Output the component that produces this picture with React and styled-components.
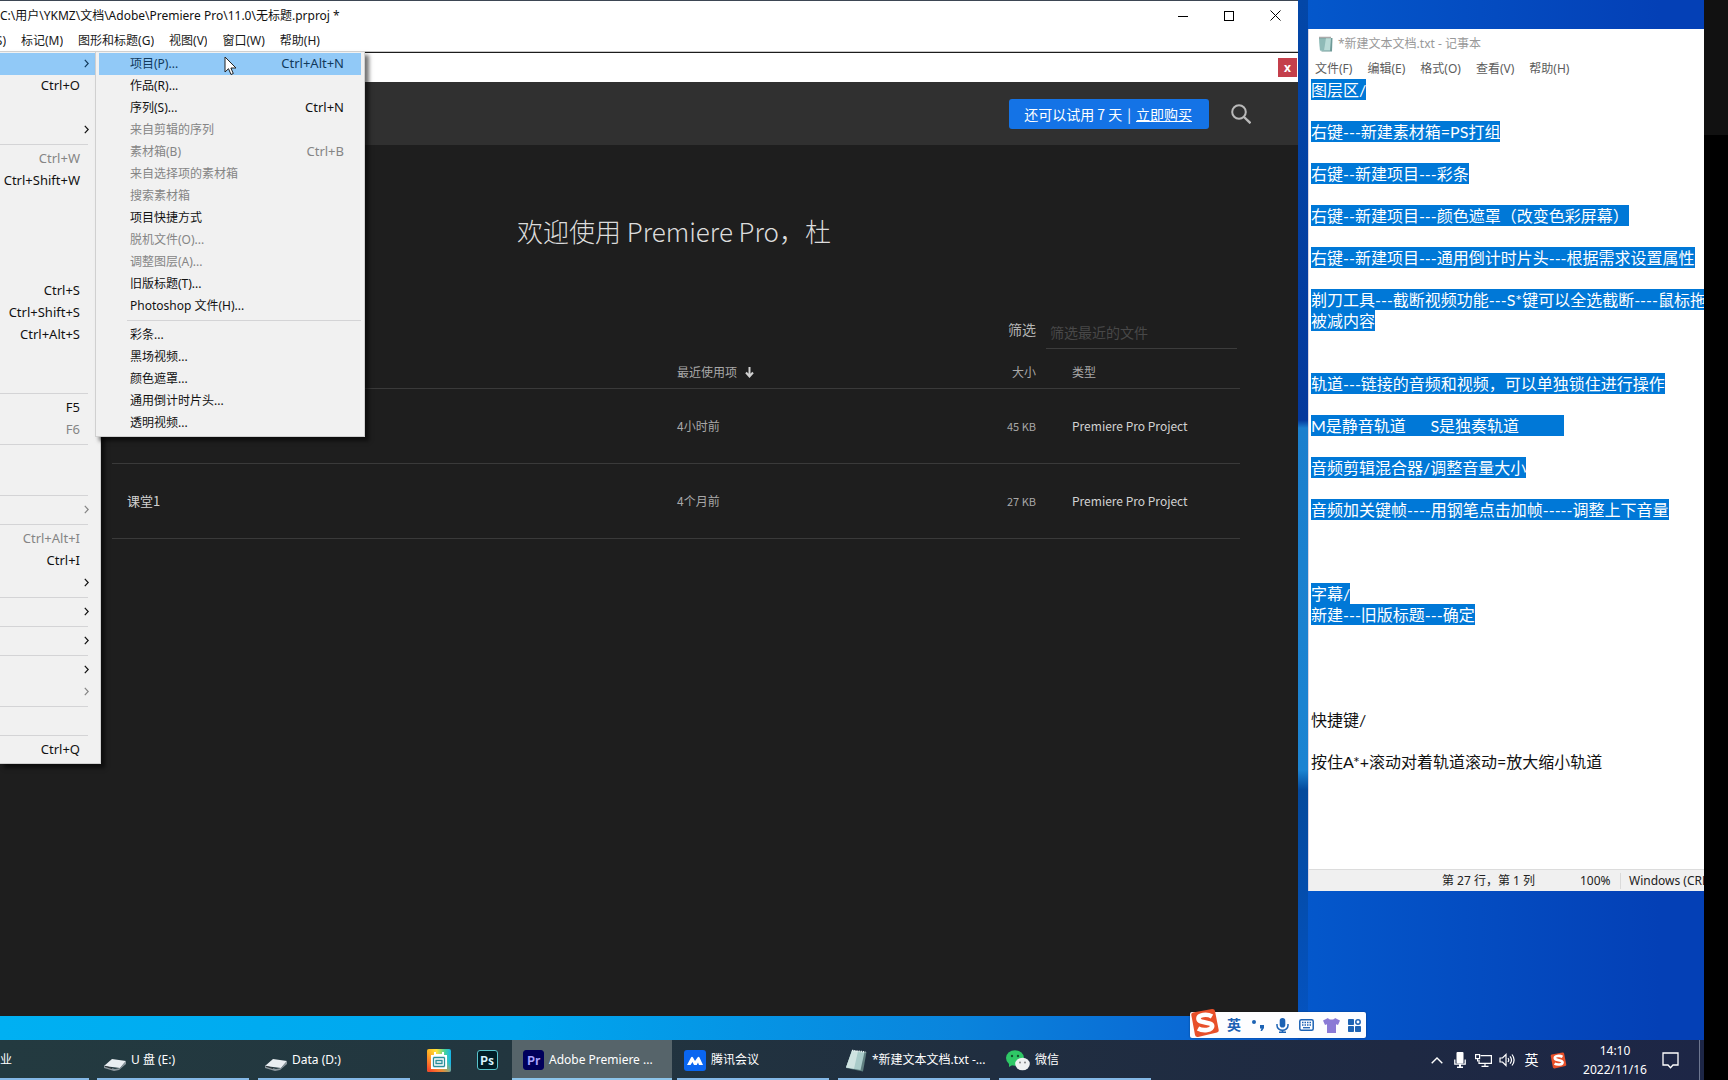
import React from "react";
import styled, { createGlobalStyle, css } from "styled-components";

const ui = `"Noto Sans", "Noto Sans CJK SC", sans-serif`;
const cjk = `"Noto Sans CJK SC", "Noto Sans", sans-serif`;
const note = `Lato, "Noto Sans CJK SC", sans-serif`;

const Global = createGlobalStyle`
  * { box-sizing: border-box; }
  html, body { margin: 0; background: #000; }
  body { font: 12px/16px ${ui}; overflow: hidden; }
  button { margin: 0; padding: 0; border: 0; background: none; font: inherit; color: inherit; cursor: default; white-space: nowrap; }
  a { color: inherit; }
  svg { display: block; flex: none; }
`;

/* ---------- screen ---------- */
const Screen = styled.div`
  display: grid;
  grid-template-columns: minmax(0, 1fr) 24px;
  height: 100vh;
`;
const Bezel = styled.div`
  background: linear-gradient(#111 135px, #000 135px);
`;
const Desktop = styled.div`
  display: flex;
  flex-direction: column;
  min-width: 0;
  background:
    linear-gradient(90deg, #00b0f2 0, #00a6ee 520px, #0a84dc 960px, #0a5cd0 1290px, transparent 1300px) bottom 40px left / 100% 26px no-repeat,
    linear-gradient(#0347a8 0, #04389c 420px, #1c7fcd 428px, #1c84d2 770px, #04499c 790px, #0450b8 960px, #0556c6 100%) 1298px 0 / 10px 100% no-repeat,
    linear-gradient(90deg, #0458cc 1300px, #0440b6 1660px);
`;
const Workspace = styled.div`
  position: relative;
  flex: 1;
  display: flex;
  align-items: stretch;
  gap: 10px;
  min-height: 0;
`;

/* ---------- Premiere window ---------- */
const AppWindow = styled.section`
  position: relative;
  flex: 1;
  min-width: 0;
  margin-bottom: 24px;
  display: flex;
  flex-direction: column;
  background: #1e1e1e;
  border-top: 1px solid #3d4654;
  overflow: hidden;
`;
const TitleBar = styled.header`
  display: flex;
  align-items: center;
  justify-content: space-between;
  height: 29px;
  background: #fff;
  color: #111;
`;
const TitleText = styled.div`
  white-space: pre;
`;
const WindowButtons = styled.div`
  display: flex;
`;
const WindowButton = styled.button`
  display: grid;
  place-items: center;
  width: 46px;
  height: 29px;
`;
const MenuBar = styled.nav`
  display: flex;
  align-items: center;
  gap: 15px;
  height: 22px;
  background: #fff;
  border-bottom: 1px solid #c8c8c8;
  color: #1a1a1a;
`;
const MenuBarItem = styled.button`
  display: flex;
  justify-content: flex-end;
  width: ${(p) => (p.$clipped ? "6px" : "auto")};
  overflow: hidden;
`;
const PanelStrip = styled.div`
  display: flex;
  align-items: center;
  justify-content: flex-end;
  height: 30px;
  padding-right: 1px;
  background: #fff;
  border-top: 1px solid #1c1c1c;
`;
const RedClose = styled.button`
  width: 19px;
  height: 19px;
  background: #c43f4b;
  color: #fff;
  font-weight: 700;
  line-height: 16px;
`;
const HomeHeader = styled.div`
  display: flex;
  align-items: center;
  justify-content: flex-end;
  gap: 22px;
  height: 63px;
  padding-right: 47px;
  background: #303030;
`;
const Trial = styled.div`
  display: flex;
  align-items: center;
  gap: 5px;
  height: 30px;
  padding: 0 17px 0 15px;
  border-radius: 3px;
  background: #1473e6;
  color: #fff;
  font: 14px/20px ${cjk};
  white-space: nowrap;
`;
const Home = styled.main`
  flex: 1;
  display: flex;
  flex-direction: column;
  padding: 64px 58px 0 112px;
  color: #c4c4c4;
  font: 12px/16px ${cjk};
`;
const Welcome = styled.h1`
  margin: 0 0 62px;
  padding-right: 4px;
  font: 300 26px/44px ${cjk};
  color: #dcdcdc;
  text-align: center;
  white-space: pre;
`;
const Filter = styled.label`
  display: flex;
  align-items: flex-start;
  justify-content: flex-end;
  gap: 10px;
  padding-right: 3px;
  font-size: 14px;
  line-height: 28px;
  color: #b4b4b4;
`;
const FilterInput = styled.input`
  width: 191px;
  height: 34px;
  padding: 0 4px;
  border: 0;
  border-bottom: 1px solid #3c3c3c;
  background: none;
  font: 14px/20px ${cjk};
  color: #ccc;
  &::placeholder { color: #484848; opacity: 1; }
`;
const Recent = styled.table`
  width: 100%;
  border-collapse: collapse;
  table-layout: fixed;
  th, td { padding: 0; text-align: left; border-bottom: 1px solid #3a3a3a; font-weight: 400; }
  th { height: 39px; padding-top: 8px; color: #a8a8a8; }
  td { height: 75px; }
  th:first-child, td:first-child { padding-left: 15px; font-size: 13px; color: #d2d2d2; }
  th:nth-child(3), td:nth-child(3) { text-align: right; }
  th:last-child, td:last-child { padding-left: 36px; }
  td:nth-child(2), td:nth-child(3) { color: #a8a8a8; }
  td:nth-child(3) { font-size: 11px; }
  td:last-child { color: #d2d2d2; }
`;
const Col = styled.col`
  width: ${(p) => p.$w};
`;
const SortHead = styled.span`
  display: flex;
  align-items: center;
  gap: 8px;
`;

/* ---------- drop-down menus ---------- */
const Menu = styled.div`
  position: absolute;
  top: 50px;
  left: ${(p) => p.$left};
  width: ${(p) => p.$width};
  padding: 1px ${(p) => (p.$sub ? "3px 2px" : "0 2px 0")};
  background: #f1f1f1;
  border: 1px solid #d0d0d0;
  border-left-width: ${(p) => (p.$sub ? "1px" : "0")};
  box-shadow: 4px 4px 4px rgba(0, 0, 0, 0.55);
  color: #111;
`;
const MenuRow = styled.button`
  display: flex;
  align-items: center;
  width: 100%;
  height: 22px;
  padding-left: ${(p) => (p.$sub ? "31px" : "0")};
  padding-right: ${(p) => (p.$sub ? "17px" : "11px")};
  color: ${(p) => (p.$off ? "#858585" : "#111")};
  ${(p) => p.$on && css`background: #91c9f7; color: #123a5c;`}
`;
const RowKeys = styled.span`
  flex: 1;
  padding-bottom: 2px;
  text-align: right;
  font-size: 13px;
`;
const ArrowSlot = styled.span`
  display: grid;
  place-items: center end;
  width: 9px;
  padding-bottom: 2px;
`;
const Separator = styled.div`
  height: 7px;
  padding-top: 3px;
  margin: 0 ${(p) => (p.$sub ? "0 0 28px" : "12px 0 0")};
  &::after { content: ""; display: block; height: 1px; background: #d4d4d6; }
`;
const Cursor = styled.svg`
  position: absolute;
  left: 224px;
  top: 55px;
`;

/* ---------- notepad ---------- */
const Notepad = styled.section`
  flex: 0 0 396px;
  min-width: 0;
  margin: 29px 0 149px;
  display: flex;
  flex-direction: column;
  background: #fff;
  border-left: 1px solid #d9d3e2;
  overflow: hidden;
`;
const NoteTitle = styled.header`
  display: flex;
  align-items: center;
  gap: 5px;
  height: 30px;
  padding-left: 9px;
  color: #999;
  white-space: nowrap;
`;
const NoteMenu = styled.nav`
  display: flex;
  align-items: center;
  gap: 15px;
  height: 20px;
  padding-left: 6px;
  color: #5c5c5c;
`;
const NoteText = styled.div`
  flex: 1;
  min-height: 0;
  padding-left: 2px;
  overflow: hidden;
  outline: none;
  font: 16px/21px ${note};
  color: #111;
  white-space: pre;
`;
const NoteLine = styled.div`
  height: 21px;
`;
const Selected = styled.mark`
  display: inline-block;
  height: 21px;
  background: #0078d7;
  color: #fff;
`;
const NoteStatus = styled.footer`
  display: flex;
  align-items: center;
  justify-content: flex-end;
  height: 22px;
  background: #f0f0f0;
  border-top: 1px solid #dcdcdc;
  color: #222;
  white-space: pre;
`;
const StatusCell = styled.span`
  width: ${(p) => p.$w};
  padding-left: 8px;
  border-left: ${(p) => (p.$line ? "1px solid #dadada" : "0")};
  overflow: hidden;
`;

/* ---------- input method bar ---------- */
const ImeBar = styled.div`
  position: absolute;
  left: 1190px;
  bottom: 2px;
  display: flex;
  align-items: center;
  gap: 10px;
  height: 26px;
  padding-right: 5px;
  border-radius: 2px;
  background: #fdfdff;
  box-shadow: 0 0 2px rgba(0, 0, 0, 0.4);
`;
const ImeLogo = styled.span`
  width: 27px;
  height: 32px;
  margin-top: -3px;
`;
const ImeKey = styled.button`
  display: grid;
  place-items: center;
  width: 14px;
  color: #1c62b4;
  font-weight: 700;
  font-size: 14px;
`;

/* ---------- taskbar ---------- */
const Taskbar = styled.footer`
  flex: none;
  display: flex;
  align-items: stretch;
  justify-content: space-between;
  height: 40px;
  background: linear-gradient(90deg, #233a40 0, #22363f 500px, #202e40 1000px, #1e2943 1400px, #1d2646 100%);
  color: #fff;
`;
const Tasks = styled.div`
  display: flex;
  gap: 1px;
`;
const Task = styled.button`
  display: flex;
  align-items: center;
  gap: 5px;
  width: ${(p) => p.$w || "160px"};
  padding: 0 0 0 ${(p) => (p.$flush ? "0" : "11px")};
  ${(p) => p.$open && css`
    background: linear-gradient(#84b8e6, #84b8e6) bottom left ${p.$flush ? "0" : "4px"} / calc(100% - ${p.$flush ? "3px" : "8px"}) 2px no-repeat;
  `}
  ${(p) => p.$active && css`
    background: linear-gradient(#8cc4ea, #8cc4ea) bottom / 100% 2px no-repeat, #56646a;
  `}
  ${(p) => p.$icon && css`justify-content: center; padding-left: 0;`}
`;
const Tray = styled.div`
  display: flex;
  align-items: center;
  gap: 8px;
`;
const TrayButton = styled.button`
  display: grid;
  place-items: center;
  width: ${(p) => p.$w || "15px"};
  height: 40px;
  font-size: 14px;
`;
const Clock = styled.time`
  width: 78px;
  text-align: center;
  font-size: 12px;
  line-height: 19px;
`;
const PeekEdge = styled.div`
  align-self: stretch;
  width: 5px;
  margin-left: 12px;
  border-left: 1px solid #6d7690;
`;

/* ---------- drawings ---------- */
const Chevron = () => (
  <svg width="5" height="9" viewBox="0 0 5 9" fill="none" stroke="currentColor" strokeWidth="1.2"><path d="M.8 .8 4.200 4.500.8 8.200" /></svg>
);
const SearchIcon = () => (
  <svg width="20" height="20" viewBox="0 0 20 20" fill="none" stroke="#b9b9b9" strokeWidth="2"><circle cx="8" cy="8" r="6.8" /><path d="m13 13 6.5 6.3" strokeWidth="2.4" /></svg>
);
const SortArrow = () => (
  <svg width="9" height="11" viewBox="0 0 9 11" fill="none" stroke="#d0d0d0" strokeWidth="2"><path d="M4.500 0v9M1 5.500l3.500 4 3.500-4" /></svg>
);
const NoteIcon = ({ size = 15 }) => (
  <svg width={size} height={size + 1} viewBox="0 0 15 16">
    <path d="M2.500 2h12l-.5 13.500H3.500z" fill="#6f9a98" />
    <path d="M1 2h12l-1 12.500H2z" fill="#b9dad6" />
    <path d="M1 2h7l-2 12.500H2z" fill="#8fbab7" />
    <path d="M1.500 1.500h12" stroke="#555" strokeWidth="1.600" strokeDasharray="1 1" />
  </svg>
);
const TaskNoteIcon = () => (
  <svg width="22" height="23" viewBox="0 0 22 23">
    <path d="M7 1.500 21.500 3 18 22.500 1 19z" fill="#5f7f80" />
    <path d="M7 1.500 19.500 3 15.500 21 1 18.500z" fill="#a9cbc9" />
    <path d="M7 1.500l6 .8L9 19.800 1 18.500z" fill="#cfe3e1" />
    <path d="M7 1.500 20.500 3" stroke="#e9f2f2" strokeWidth="1.600" strokeDasharray="1.200 1" />
  </svg>
);
const DriveIcon = () => (
  <svg width="22" height="21" viewBox="0 -8 22 21">
    <path d="M0 8 8 1l14 2-6 7z" fill="#e9eef2" />
    <path d="M0 8l11 3 5-1 6-7v3l-7 6-5 1L0 10z" fill="#8b979e" />
    <path d="M1 8.300l7 2.200" stroke="#2c3338" strokeWidth="1.200" />
  </svg>
);
const SogouMark = ({ size }) => (
  <svg width={size} height={size} viewBox="0 0 30 30">
    <path d="M3 4.500Q1 5 1.300 7L5 27q.5 2.300 3 2l19-4.500q2-.5 1.700-2.500L25 3q-.4-2.300-3-2z" fill="#e8502a" />
    <path d="M22 8.500C17 5.500 8 6.500 8.500 11c.4 4.500 13.500 2.500 13.700 7 .1 4.500-9.200 5.300-14.200 2.500" fill="none" stroke="#fff" strokeWidth="4.600" />
  </svg>
);
const MicIcon = ({ color = "currentColor", s = 15 }) => (
  <svg width={s} height={s} viewBox="0 0 15 15" fill={color}><rect x="4.700" y="0" width="5.600" height="9.500" rx="2.800" /><path d="M2 6v1.500a5.500 4.700 0 0 0 11 0V6" fill="none" stroke={color} strokeWidth="1.500" /><path d="M6.700 12h1.600v1.500H11V15H4v-1.500h2.700z" /></svg>
);
const TrayMicIcon = () => (
  <svg width="12" height="16" viewBox="0 0 12 16" fill="#fff"><rect x="2.500" width="7" height="11.500" rx="1" /><path d="M.8 7.500v4.700h10.400V7.500" fill="none" stroke="#fff" strokeWidth="1.300" /><path d="M5 12h2v2.500h2V16H3v-1.500h2z" /></svg>
);
const KeyboardIcon = () => (
  <svg width="15" height="12" viewBox="0 0 15 12" fill="none" stroke="#1c62b4"><rect x=".8" y=".8" width="13.400" height="10.400" rx="1.500" strokeWidth="1.500" /><path d="M3 3.500h9M3 6h9" strokeWidth="1.500" strokeDasharray="1.500 1" /><path d="M4 8.700h7" strokeWidth="1.300" /></svg>
);
const ShirtIcon = () => (
  <svg width="17" height="15" viewBox="0 0 17 15"><path d="M5 0c1 2 6 2 7 0l5 2.500-2 4.500-2-.8V15H4V6.200L2 7 0 2.500z" fill="#8b7ad6" /></svg>
);
const GridIcon = () => (
  <svg width="13" height="13" viewBox="0 0 13 13" fill="#1c62b4"><rect width="6" height="6" rx=".8" /><rect y="7" width="6" height="6" rx=".8" /><rect x="7" y="7" width="6" height="6" rx=".8" /><circle cx="10" cy="3" r="2.200" fill="none" stroke="#1c62b4" strokeWidth="1.500" /></svg>
);
const PunctIcon = () => (
  <svg width="13" height="12" viewBox="0 0 13 12" fill="#1c62b4"><circle cx="2" cy="3" r="2" /><path d="M8 6h4v3l-2 3H8.500l1-2.500H8z" /></svg>
);
const StickerIcon = () => (
  <svg width="24" height="23" viewBox="0 0 24 23">
    <defs>
      <linearGradient id="side" x1="0" y1="0" x2="1" y2="0"><stop offset="0" stopColor="#ffc21e" /><stop offset=".4" stopColor="#ffe23a" /><stop offset=".75" stopColor="#3fd2a0" /><stop offset="1" stopColor="#16b4ea" /></linearGradient>
      <linearGradient id="foot" x1="0" y1="1" x2=".6" y2=".3"><stop offset="0" stopColor="#f0342c" /><stop offset=".5" stopColor="#ff7a2a" stopOpacity=".8" /><stop offset="1" stopColor="#ff9a2a" stopOpacity="0" /></linearGradient>
    </defs>
    <rect width="24" height="23" rx="2" fill="url(#side)" />
    <rect width="24" height="23" rx="2" fill="url(#foot)" />
    <path d="M4 6h3V3h2v2h6V3h2v3h3v14H4z" fill="#fff" />
    <path d="M6.500 8.500h11M6.500 17.500h11M9 11.500h6v3H9zM6.500 8.500v9M17.500 8.500v9" stroke="#2a8f9a" strokeWidth="1.300" fill="none" />
  </svg>
);
const AdobeIcon = styled.span`
  display: grid;
  place-items: center;
  width: 21px;
  height: 20px;
  border-radius: 3px;
  border: 1px solid ${(p) => p.$edge};
  background: ${(p) => p.$bg};
  color: ${(p) => p.$fg};
  font: 700 12px/16px ${cjk};
`;
const MeetingIcon = () => (
  <svg width="22" height="21" viewBox="0 0 22 21"><rect width="22" height="21" rx="3" fill="#0a66f0" /><path d="M3 15 7 7.500q1-1.500 2 0L11 11l2.500-3.500q1-1.300 2 0L19 15h-4l-1-2.500-1.300 2.500H10L8.500 12 6.500 15z" fill="#fff" /></svg>
);
const WechatIcon = () => (
  <svg width="24" height="21" viewBox="0 0 24 21"><ellipse cx="9" cy="8" rx="9" ry="7.700" fill="#2fc866" /><path d="M3 13v4l4-2.500z" fill="#2fc866" /><circle cx="6" cy="6" r="1.200" fill="#14532d" /><circle cx="12" cy="6" r="1.200" fill="#14532d" /><ellipse cx="16.500" cy="14" rx="7.300" ry="6.300" fill="#eef1f0" /><circle cx="14" cy="12.500" r=".9" fill="#777" /><circle cx="19" cy="12.500" r=".9" fill="#777" /></svg>
);

/* ---------- content ---------- */
const fileMenu = [
  { on: true, arrow: true }, { keys: "Ctrl+O" }, {}, { arrow: true }, "-",
  { keys: "Ctrl+W", off: true }, { keys: "Ctrl+Shift+W" }, {}, {}, {}, {},
  { keys: "Ctrl+S" }, { keys: "Ctrl+Shift+S" }, { keys: "Ctrl+Alt+S" }, {}, {}, "-",
  { keys: "F5" }, { keys: "F6", off: true }, "-", {}, {}, "-",
  { arrow: true, off: true }, "-",
  { keys: "Ctrl+Alt+I", off: true }, { keys: "Ctrl+I" }, { arrow: true }, "-",
  { arrow: true }, "-", { arrow: true }, "-",
  { arrow: true }, { arrow: true, off: true }, "-", {}, "-", { keys: "Ctrl+Q" },
];
const newMenu = [
  { label: "项目(P)...", keys: "Ctrl+Alt+N", on: true },
  { label: "作品(R)..." },
  { label: "序列(S)...", keys: "Ctrl+N" },
  { label: "来自剪辑的序列", off: true },
  { label: "素材箱(B)", keys: "Ctrl+B", off: true },
  { label: "来自选择项的素材箱", off: true },
  { label: "搜索素材箱", off: true },
  { label: "项目快捷方式" },
  { label: "脱机文件(O)...", off: true },
  { label: "调整图层(A)...", off: true },
  { label: "旧版标题(T)..." },
  { label: "Photoshop 文件(H)..." },
  "-",
  { label: "彩条..." }, { label: "黑场视频..." }, { label: "颜色遮罩..." },
  { label: "通用倒计时片头..." }, { label: "透明视频..." },
];
const recent = [
  { name: "", when: "4小时前", size: "45 KB" },
  { name: "课堂1", when: "4个月前", size: "27 KB" },
];
const notes = [
  "图层区/", "", "右键---新建素材箱=PS打组", "", "右键--新建项目---彩条", "",
  "右键--新建项目---颜色遮罩（改变色彩屏幕）", "",
  "右键--新建项目---通用倒计时片头---根据需求设置属性", "",
  "剃刀工具---截断视频功能---S*键可以全选截断----鼠标拖", "被减内容", "", "",
  "轨道---链接的音频和视频，可以单独锁住进行操作", "",
  "M是静音轨道      S是独奏轨道           ", "",
  "音频剪辑混合器/调整音量大小", "",
  "音频加关键帧----用钢笔点击加帧-----调整上下音量", "", "", "",
  "字幕/", "新建---旧版标题---确定", "", "", "", "",
  "快捷键/", "", "按住A*+滚动对着轨道滚动=放大缩小轨道",
];
const selectedUntil = 26;

function MenuList({ items, sub, left, width, label }) {
  return (
    <Menu role="menu" aria-label={label} $sub={sub} $left={left} $width={width}>
      {items.map((it, i) =>
        it === "-" ? (
          <Separator key={i} role="separator" $sub={sub} />
        ) : (
          <MenuRow key={i} role="menuitem" type="button" $sub={sub} $on={it.on} $off={it.off}>
            {it.label && <span>{it.label}</span>}
            <RowKeys>{it.keys}</RowKeys>
            {!sub && <ArrowSlot>{it.arrow && <Chevron />}</ArrowSlot>}
          </MenuRow>
        )
      )}
    </Menu>
  );
}

function Premiere() {
  return (
    <AppWindow>
      <TitleBar>
        <TitleText>C:\用户\YKMZ\文档\Adobe\Premiere Pro\11.0\无标题.prproj *</TitleText>
        <WindowButtons>
          <WindowButton type="button" aria-label="最小化"><svg width="10" height="10" stroke="#000"><path d="M0 5.500h10" /></svg></WindowButton>
          <WindowButton type="button" aria-label="最大化"><svg width="10" height="10" stroke="#000" fill="none"><rect x=".5" y=".5" width="9" height="9" /></svg></WindowButton>
          <WindowButton type="button" aria-label="关闭"><svg width="11" height="11" stroke="#000"><path d="m.5.5 10 10m0-10-10 10" /></svg></WindowButton>
        </WindowButtons>
      </TitleBar>
      <MenuBar>
        <MenuBarItem type="button" $clipped>序列(S)</MenuBarItem>
        {["标记(M)", "图形和标题(G)", "视图(V)", "窗口(W)", "帮助(H)"].map((m) => (
          <MenuBarItem type="button" key={m}>{m}</MenuBarItem>
        ))}
      </MenuBar>
      <PanelStrip><RedClose type="button" aria-label="关闭面板">x</RedClose></PanelStrip>
      <HomeHeader>
        <Trial><span>还可以试用 7 天</span><span>|</span><a href="#buy">立即购买</a></Trial>
        <button type="button" aria-label="搜索"><SearchIcon /></button>
      </HomeHeader>
      <Home>
        <Welcome>欢迎使用 Premiere Pro，杜</Welcome>
        <Filter>筛选<FilterInput placeholder="筛选最近的文件" /></Filter>
        <Recent>
          <colgroup><Col $w="auto" /><Col $w="250px" /><Col $w="109px" /><Col $w="204px" /></colgroup>
          <thead>
            <tr><th /><th><SortHead>最近使用项<SortArrow /></SortHead></th><th>大小</th><th>类型</th></tr>
          </thead>
          <tbody>
            {recent.map((r) => (
              <tr key={r.when}><td>{r.name}</td><td>{r.when}</td><td>{r.size}</td><td>Premiere Pro Project</td></tr>
            ))}
          </tbody>
        </Recent>
      </Home>
      <MenuList items={fileMenu} left="0" width="101px" label="文件" />
      <MenuList items={newMenu} sub left="95px" width="270px" label="新建" />
      <Cursor width="13" height="20" viewBox="0 0 13 20"><path d="M1 1v15l3.500-3.300L7 18.500l2.300-1-2.400-5.500H12z" fill="#fff" stroke="#222" /></Cursor>
    </AppWindow>
  );
}

function NotepadWindow() {
  return (
    <Notepad>
      <NoteTitle><NoteIcon />*新建文本文档.txt - 记事本</NoteTitle>
      <NoteMenu>
        {["文件(F)", "编辑(E)", "格式(O)", "查看(V)", "帮助(H)"].map((m) => <button type="button" key={m}>{m}</button>)}
      </NoteMenu>
      <NoteText role="textbox" aria-multiline="true" aria-label="文本" contentEditable suppressContentEditableWarning spellCheck={false}>
        {notes.map((t, i) => (
          <NoteLine key={i}>{t && i < selectedUntil ? <Selected>{t}</Selected> : t}</NoteLine>
        ))}
      </NoteText>
      <NoteStatus>
        <StatusCell $w="138px">第 27 行，第 1 列</StatusCell>
        <StatusCell $w="48px">100%</StatusCell>
        <StatusCell $w="84px" $line>Windows (CRLF)</StatusCell>
      </NoteStatus>
    </Notepad>
  );
}

export default function App() {
  return (
    <>
      <Global />
      <Screen>
        <Desktop>
          <Workspace>
            <Premiere />
            <NotepadWindow />
            <ImeBar>
              <ImeLogo><SogouMark size={30} /></ImeLogo>
              <ImeKey type="button">英</ImeKey>
              <ImeKey type="button" aria-label="标点"><PunctIcon /></ImeKey>
              <ImeKey type="button" aria-label="语音"><MicIcon /></ImeKey>
              <ImeKey type="button" aria-label="键盘"><KeyboardIcon /></ImeKey>
              <ImeKey type="button" aria-label="皮肤"><ShirtIcon /></ImeKey>
              <ImeKey type="button" aria-label="工具箱"><GridIcon /></ImeKey>
            </ImeBar>
          </Workspace>
          <Taskbar>
            <Tasks>
              <Task type="button" $open $flush $w="92px">业</Task>
              <Task type="button" $open><DriveIcon />U 盘 (E:)</Task>
              <Task type="button" $open><DriveIcon />Data (D:)</Task>
              <Task type="button" $icon $w="47px" aria-label="便签"><StickerIcon /></Task>
              <Task type="button" $icon $w="48px"><AdobeIcon $bg="#001d26" $edge="#58c4cc" $fg="#d8f4ff">Ps</AdobeIcon></Task>
              <Task type="button" $active><AdobeIcon $bg="#00005b" $edge="#00005b" $fg="#a9a4ff">Pr</AdobeIcon>Adobe Premiere ...</Task>
              <Task type="button" $open><MeetingIcon />腾讯会议</Task>
              <Task type="button" $open><TaskNoteIcon />*新建文本文档.txt -...</Task>
              <Task type="button" $open><WechatIcon />微信</Task>
            </Tasks>
            <Tray>
              <TrayButton type="button" aria-label="显示隐藏的图标"><svg width="12" height="7" fill="none" stroke="#fff" strokeWidth="1.400"><path d="m.7 6.300 5.300-5.300 5.300 5.300" /></svg></TrayButton>
              <TrayButton type="button" aria-label="麦克风"><TrayMicIcon /></TrayButton>
              <TrayButton type="button" $w="16px" aria-label="网络"><svg width="17" height="13" viewBox="0 0 17 13" fill="none" stroke="#fff" strokeWidth="1.200"><path d="M5.500 1.600h10.900v7.800H4V6M10 9.500v3M6.500 12.400h7" /><rect x=".6" y=".6" width="4" height="4" /><path d="M2.600 4.500v3" /></svg></TrayButton>
              <TrayButton type="button" $w="16px" aria-label="音量"><svg width="16" height="14" viewBox="0 0 16 14" fill="none" stroke="#fff" strokeWidth="1.200"><path d="M1 5h2.500L7 1.500v11L3.500 9H1zM9 5q1.500 2 0 4M11 3.300q3 3.700 0 7.400M13 1.500q4.200 5.500 0 11" /></svg></TrayButton>
              <TrayButton type="button" $w="17px">英</TrayButton>
              <TrayButton type="button" $w="20px" aria-label="搜狗输入法"><SogouMark size={17} /></TrayButton>
              <Clock>14:10<br />2022/11/16</Clock>
              <TrayButton type="button" $w="17px" aria-label="通知"><svg width="17" height="17" viewBox="0 0 17 17" fill="none" stroke="#fff" strokeWidth="1.300"><path d="M1 1h15v12h-5l-2.500 2.700L6 13H1z" /></svg></TrayButton>
              <PeekEdge />
            </Tray>
          </Taskbar>
        </Desktop>
        <Bezel />
      </Screen>
    </>
  );
}
